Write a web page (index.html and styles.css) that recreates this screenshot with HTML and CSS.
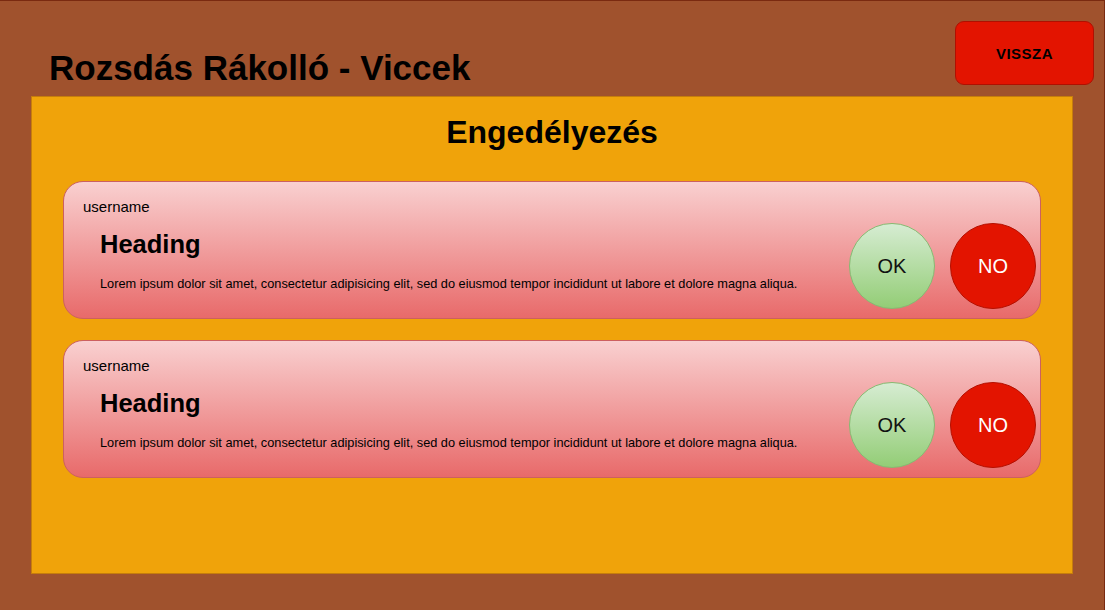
FILE: index.html
```html
<!DOCTYPE html>
<html lang="hu">
<head>
<meta charset="utf-8">
<title>Rozsdás Rákolló - Viccek</title>
<link rel="stylesheet" href="styles.css">
</head>
<body>
<div class="page">
  <header class="topbar">
    <h1 class="site-title">Rozsdás Rákolló - Viccek</h1>
    <button class="back-btn">VISSZA</button>
  </header>
  <main class="panel">
    <h2 class="panel-title">Engedélyezés</h2>
    <div class="list">
      <div class="card">
        <div class="card-body">
          <div class="username">username</div>
          <h3 class="card-heading">Heading</h3>
          <p class="card-text">Lorem ipsum dolor sit amet, consectetur adipisicing elit, sed do eiusmod tempor incididunt ut labore et dolore magna aliqua.</p>
        </div>
        <div class="actions">
          <button class="round ok">OK</button>
          <button class="round no">NO</button>
        </div>
      </div>
      <div class="card">
        <div class="card-body">
          <div class="username">username</div>
          <h3 class="card-heading">Heading</h3>
          <p class="card-text">Lorem ipsum dolor sit amet, consectetur adipisicing elit, sed do eiusmod tempor incididunt ut labore et dolore magna aliqua.</p>
        </div>
        <div class="actions">
          <button class="round ok">OK</button>
          <button class="round no">NO</button>
        </div>
      </div>
    </div>
  </main>
</div>
</body>
</html>
```

FILE: styles.css
```css
* { box-sizing: border-box; }
html, body { margin: 0; padding: 0; }
body {
  background: #a0522d;
  font-family: "Liberation Sans", Arial, sans-serif;
  color: #000;
}
.page {
  width: 1105px;
  height: 610px;
  border-top: 1px solid #7a2a10;
  border-right: 1px solid #7a2a10;
  overflow: hidden;
}
.topbar {
  height: 95px;
  position: relative;
  padding-left: 49px;
}
.site-title {
  margin: 0;
  padding-top: 47px;
  font-size: 35px;
  line-height: 40px;
  font-weight: bold;
}
.back-btn {
  position: absolute;
  top: 20px;
  right: 10px;
  width: 139px;
  height: 64px;
  background: #e31400;
  border: 1px solid #b01000;
  border-radius: 9px;
  font-family: "Liberation Sans", Arial, sans-serif;
  font-weight: bold;
  font-size: 15px;
  letter-spacing: 0.5px;
  color: #000;
}
.panel {
  margin-left: 31px;
  width: 1042px;
  height: 478px;
  background: #f0a30a;
  border: 1px solid #c67d0c;
  padding: 0 31px;
}
.panel-title {
  margin: 0;
  padding-top: 17px;
  text-align: center;
  font-size: 32px;
  line-height: 36px;
  font-weight: bold;
}
.list {
  margin-top: 31px;
  display: flex;
  flex-direction: column;
  gap: 21px;
}
.card {
  height: 138px;
  border: 1px solid #cc6060;
  border-radius: 20px;
  background: linear-gradient(to bottom, #f9d0d0, #e86a6a);
  display: flex;
  align-items: flex-end;
  justify-content: space-between;
  padding: 0 4px 9px 19px;
}
.card-body {
  align-self: flex-start;
  padding-top: 16px;
}
.username {
  font-size: 15px;
  line-height: 18px;
}
.card-heading {
  margin: 0;
  padding: 13px 0 0 17px;
  font-size: 25.5px;
  line-height: 30px;
  font-weight: bold;
}
.card-text {
  margin: 0;
  padding: 17px 0 0 17px;
  font-size: 12.75px;
  line-height: 15px;
}
.actions {
  display: flex;
  gap: 15px;
}
.round {
  width: 86px;
  height: 86px;
  border-radius: 50%;
  font-family: "Liberation Sans", Arial, sans-serif;
  font-size: 20px;
  padding: 0;
}
.ok {
  background: linear-gradient(to bottom, #d6ecd2, #93cd76);
  border: 1px solid #86bb72;
  color: #111;
}
.no {
  background: #e31400;
  border: 1px solid #b51000;
  color: #fff;
}
```
